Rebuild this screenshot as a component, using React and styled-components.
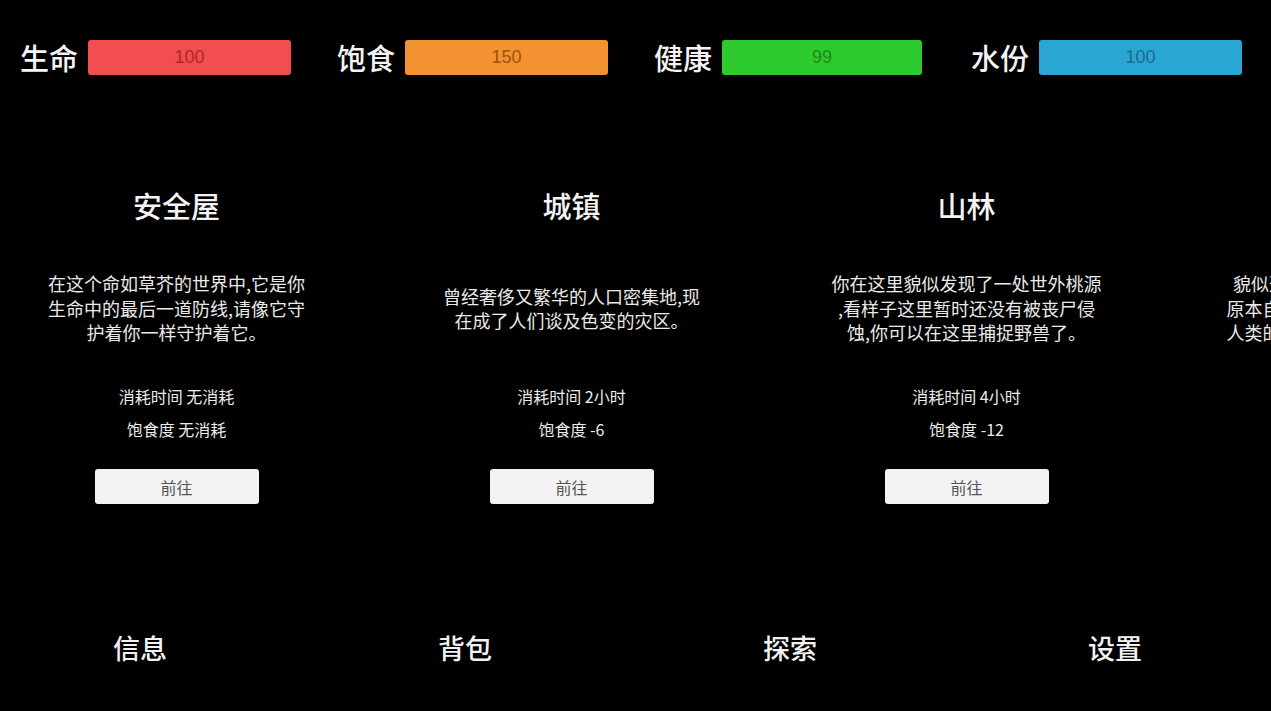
import React from 'react';
import styled, { createGlobalStyle } from 'styled-components';

const stats = [
  { label: '生命', value: 100, bg: '#f24d4f', fg: '#b3262a', width: 203 },
  { label: '饱食', value: 150, bg: '#f39230', fg: '#9e5314', width: 203 },
  { label: '健康', value: 99, bg: '#2dcb2d', fg: '#1a8a1c', width: 200 },
  { label: '水份', value: 100, bg: '#2aa6d2', fg: '#1b6b8c', width: 203 },
];

const places = [
  {
    name: '安全屋',
    desc: '在这个命如草芥的世界中,它是你\n生命中的最后一道防线,请像它守\n护着你一样守护着它。',
    time: '无消耗',
    food: '无消耗',
  },
  {
    name: '城镇',
    desc: '曾经奢侈又繁华的人口密集地,现\n在成了人们谈及色变的灾区。',
    time: '2小时',
    food: '-6',
  },
  {
    name: '山林',
    desc: '你在这里貌似发现了一处世外桃源\n,看样子这里暂时还没有被丧尸侵\n蚀,你可以在这里捕捉野兽了。',
    time: '4小时',
    food: '-12',
  },
  {
    name: '研究所',
    desc: '貌似这里是病毒最初爆发的地方,\n原本自然的生态环境已被破坏殆尽\n人类的文明也在这里走向了终结。',
    time: '6小时',
    food: '-18',
  },
];

const tabs = ['信息', '背包', '探索', '设置'];

export default function App() {
  return (
    <>
      <GlobalStyle />
      <Screen>
        <StatsBar>
          {stats.map(s => (
            <StatGroup key={s.label}>
              <StatLabel>{s.label}</StatLabel>
              <Bar $bg={s.bg} $fg={s.fg} $w={s.width}>{s.value}</Bar>
            </StatGroup>
          ))}
        </StatsBar>

        {/* place carousel, scrolled a little so the fourth card peeks in */}
        <Carousel>
          <Track>
            {places.map(p => (
              <Card key={p.name}>
                <CardTitle>{p.name}</CardTitle>
                <Desc>
                  <span>{p.desc}</span>
                </Desc>
                <Cost>
                  <div>消耗时间 {p.time}</div>
                  <div>饱食度 {p.food}</div>
                </Cost>
                <GoButton>前往</GoButton>
              </Card>
            ))}
          </Track>
        </Carousel>

        <Nav>
          {tabs.map(t => (
            <NavItem key={t}>{t}</NavItem>
          ))}
        </Nav>
      </Screen>
    </>
  );
}

const GlobalStyle = createGlobalStyle`
  html, body {
    margin: 0;
    padding: 0;
    background: #000;
  }
  body {
    font-family: "Noto Sans CJK SC", "Noto Sans", sans-serif;
    color: #f2f2f2;
  }
`;

const Screen = styled.div`
  width: 1271px;
  height: 711px;
  overflow: hidden;
  background: #000;
  display: flex;
  flex-direction: column;
`;

const StatsBar = styled.div`
  display: flex;
  padding: 40px 0 0 20px;
`;

const StatGroup = styled.div`
  flex: 0 0 317px;
  display: flex;
  align-items: center;
  gap: 10px;
`;

const StatLabel = styled.span`
  width: 58px;
  font-size: 29px;
  line-height: 35px;
  font-weight: 500;
  color: #f4f4f4;
  white-space: nowrap;
`;

const Bar = styled.div`
  width: ${p => p.$w}px;
  height: 35px;
  border-radius: 3px;
  background: ${p => p.$bg};
  color: ${p => p.$fg};
  font-family: "Liberation Sans", Arial, sans-serif;
  font-size: 18px;
  display: flex;
  align-items: center;
  justify-content: center;
`;

const Carousel = styled.div`
  margin-top: 110px;
  overflow: hidden;
`;

const Track = styled.div`
  display: flex;
  margin-left: -21px;
`;

const Card = styled.div`
  flex: 0 0 395px;
  display: flex;
  flex-direction: column;
  align-items: center;
`;

const CardTitle = styled.h2`
  margin: 0;
  font-size: 29px;
  line-height: 40px;
  font-weight: 500;
  color: #f4f4f4;
`;

const Desc = styled.div`
  margin-top: 33px;
  height: 100px;
  display: flex;
  align-items: center;
  justify-content: center;
  span {
    white-space: pre;
    text-align: center;
    font-size: 18px;
    line-height: 24.5px;
    color: #eaeaea;
  }
`;

const Cost = styled.div`
  margin-top: 22px;
  text-align: center;
  font-size: 16px;
  line-height: 33px;
  color: #ececec;
`;

const GoButton = styled.button`
  margin-top: 23px;
  width: 164px;
  height: 35px;
  border: none;
  border-radius: 3px;
  background: #f3f3f3;
  color: #555;
  font-family: "Noto Sans CJK SC", sans-serif;
  font-size: 16px;
  padding: 0;
  cursor: pointer;
`;

const Nav = styled.div`
  margin-top: 124px;
  display: flex;
  justify-content: space-between;
  padding: 0 129px 0 113px;
`;

const NavItem = styled.span`
  font-size: 27px;
  line-height: 40px;
  font-weight: 500;
  color: #f2f2f2;
`;
